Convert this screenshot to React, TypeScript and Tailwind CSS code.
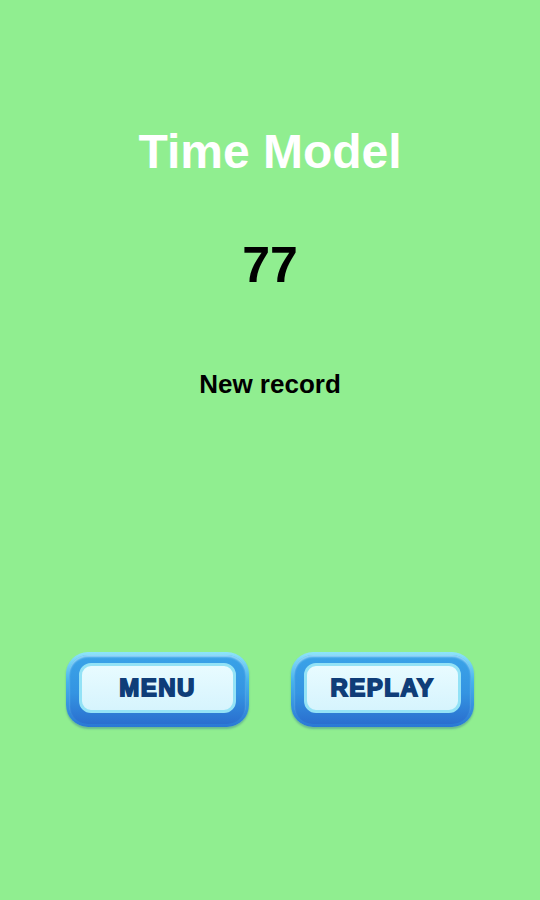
import React from 'react'

function GameButton({ label }: { label: string }): JSX.Element {
  return (
    <button
      type="button"
      className="flex h-[75px] w-[183px] rounded-[22px] bg-[linear-gradient(180deg,#8fe4f9_0%,#45b2ec_40%,#2a78d4_100%)] p-[3px] shadow-[0_2px_2px_rgba(20,70,150,0.3)]"
    >
      <div className="flex flex-1 rounded-[19px] bg-[linear-gradient(180deg,#3aa3e8_0%,#3494e2_55%,#2a6fcf_100%)] px-[10px] pb-[11px] pt-[8px] shadow-[inset_0_2px_2px_rgba(190,240,255,0.7)]">
        <div className="flex flex-1 items-center justify-center rounded-[12px] border-[3px] border-[#93e2f6] bg-[linear-gradient(180deg,#e8fbff_0%,#d6f4fd_100%)]">
          <span
            className="text-[24px] font-bold leading-none tracking-[1.5px] text-[#0f3d78] [-webkit-text-stroke:1.8px_#0f3d78]"
            style={{ fontFamily: '"Liberation Sans", Arial, sans-serif' }}
          >
            {label}
          </span>
        </div>
      </div>
    </button>
  )
}

export default function App(): JSX.Element {
  return (
    <div
      className="flex h-[900px] w-full flex-col items-center bg-[#90ee90]"
      style={{ fontFamily: '"Liberation Sans", Arial, sans-serif' }}
    >
      <div className="mt-[128px] text-[48px] font-bold leading-none text-white">Time Model</div>
      <div className="mt-[64px] text-[50px] font-bold leading-none text-black">77</div>
      <div className="mt-[81px] text-[26px] font-bold leading-none text-black">New record</div>
      <div className="mt-[255px] flex gap-[42px]">
        <GameButton label="MENU" />
        <GameButton label="REPLAY" />
      </div>
    </div>
  )
}
